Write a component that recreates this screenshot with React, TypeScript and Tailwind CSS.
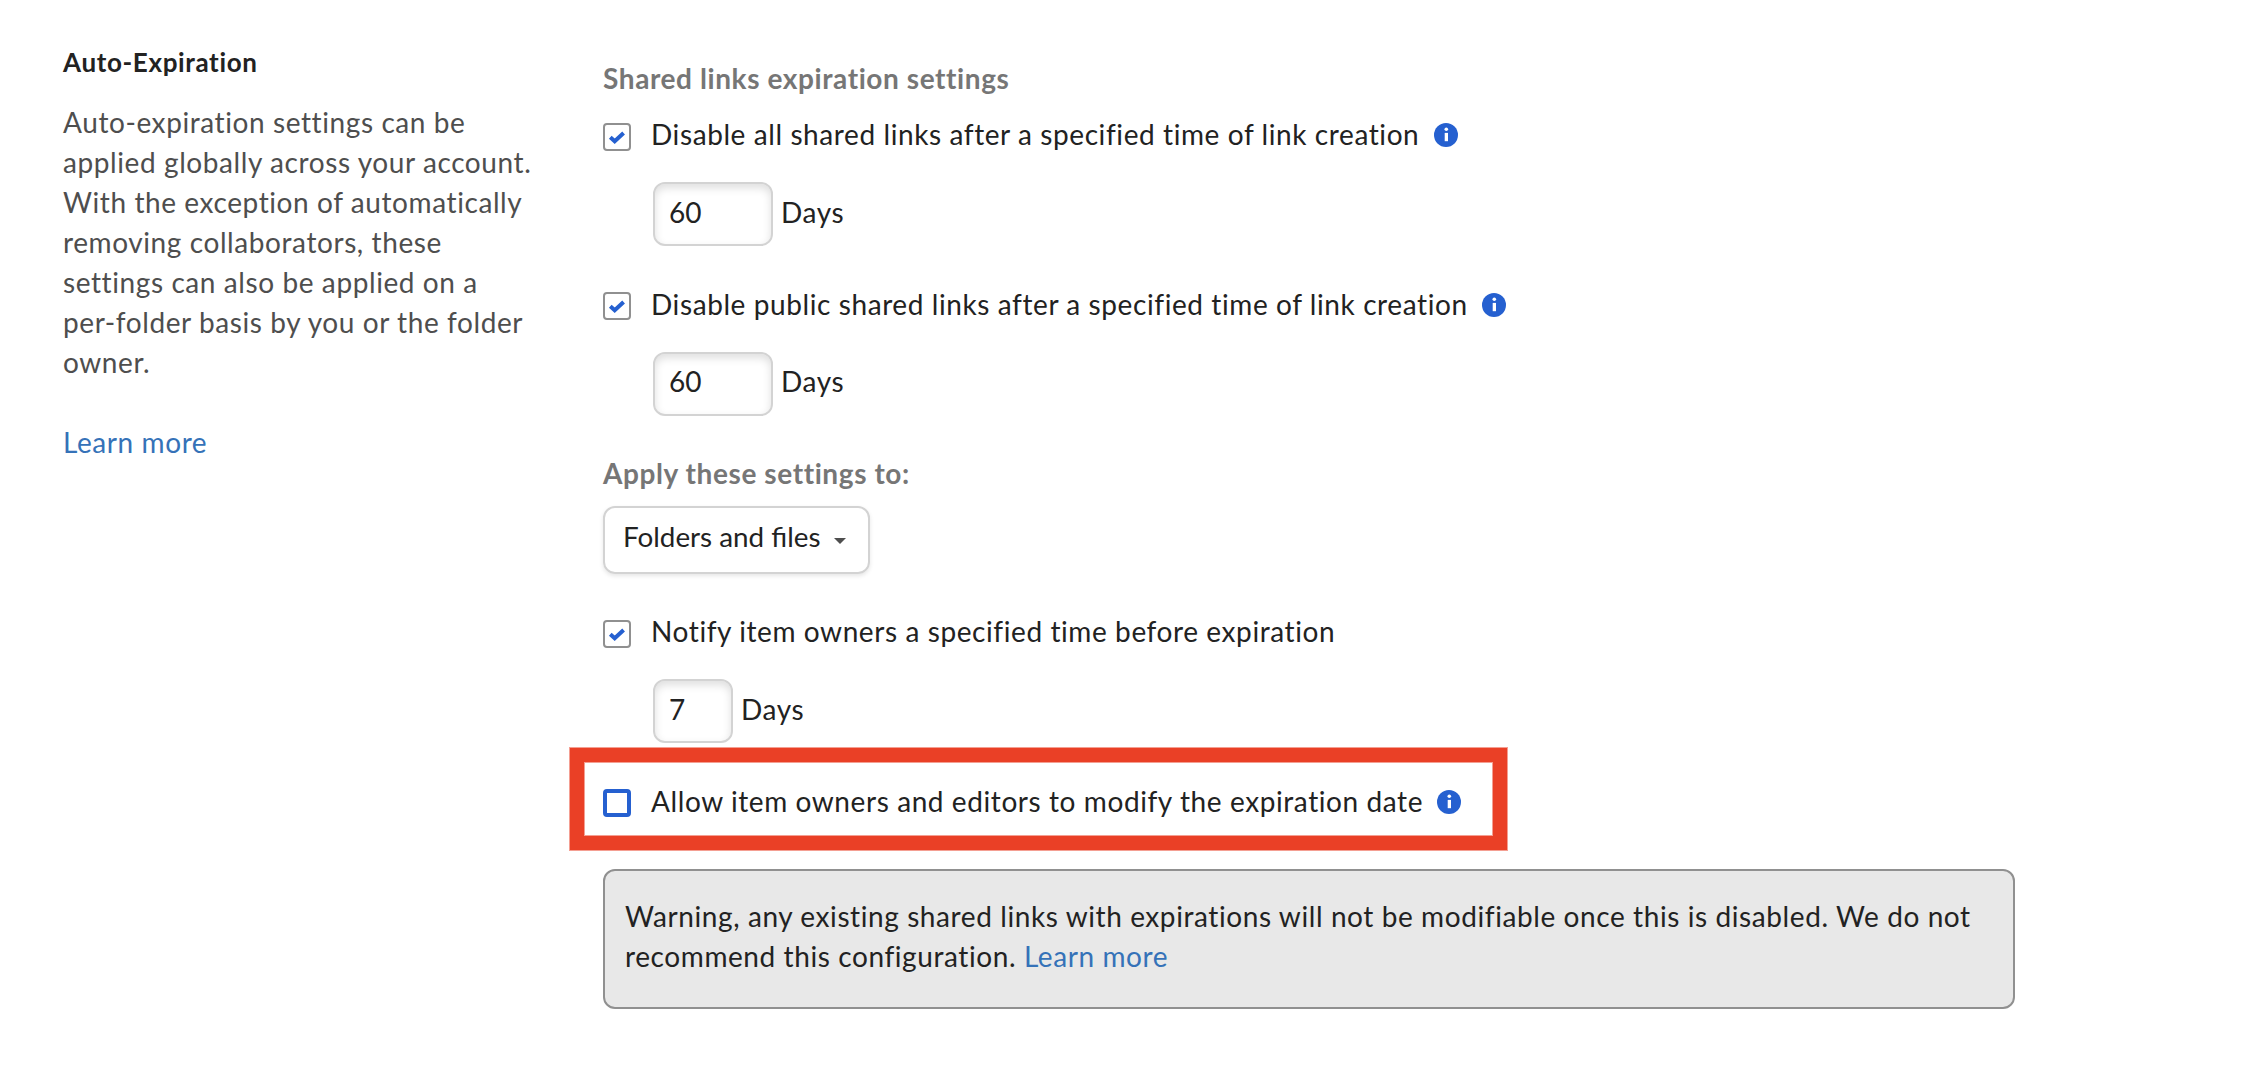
import React from "react";

function InfoIcon({ className = "" }: { className?: string }) {
  return (
    <svg className={`size-6 shrink-0 ${className}`} viewBox="0 0 24 24">
      <circle cx="12" cy="12" r="12" fill="#2560d0" />
      <circle cx="12.3" cy="6.3" r="1.8" fill="#fff" />
      <path d="M10.7 9.9h3.3v8.3h-3.3z" fill="#fff" />
    </svg>
  );
}

function Checkbox({ checked = false, className = "" }: { checked?: boolean; className?: string }) {
  return checked ? (
    <span className={`size-7 shrink-0 rounded-[4px] border-2 border-[#909090] bg-white ${className}`}>
      <svg className="size-6" viewBox="0 0 24 24">
        <path d="M5.3 12.2 9.7 16.2 18.6 8" fill="none" stroke="#2560d0" strokeWidth="4" />
      </svg>
    </span>
  ) : (
    <span className={`size-7 shrink-0 rounded-[4px] border-4 border-[#2560d0] bg-white ${className}`} />
  );
}

function Option({ label, info, checked, boxClass = "mt-[9px]", infoClass = "ml-[15px]" }: { label: string; info?: boolean; checked?: boolean; boxClass?: string; infoClass?: string }) {
  return (
    <div className="flex h-10 items-start whitespace-nowrap">
      <Checkbox checked={checked} className={boxClass} />
      <span className="ml-5">{label}</span>
      {info && <InfoIcon className={`mt-[9px] ${infoClass}`} />}
    </div>
  );
}

function DaysField({ value, widthClass, valueClass = "pt-2", unitClass = "mt-[10px]" }: { value: string; widthClass: string; valueClass?: string; unitClass?: string }) {
  return (
    <div className="ml-[50px] mt-7 flex h-16 items-start">
      <div className={`h-16 rounded-xl border-2 border-[#d3d3d3] pl-[14px] tracking-normal shadow-[inset_0_4px_9px_rgba(0,0,0,0.13)] ${valueClass} ${widthClass}`}>
        {value}
      </div>
      <span className={`ml-2 ${unitClass}`}>Days</span>
    </div>
  );
}

export default function App() {
  return (
    <main className="flex h-[1066px] w-[2248px] overflow-hidden bg-white font-['Lato',sans-serif] text-[28px] leading-10 tracking-[0.59px] text-[#222]">
      <aside className="ml-[63px] w-[500px] shrink-0 pt-[42px]">
        <h2 className="text-[26px] font-bold tracking-[0.64px]">Auto-Expiration</h2>
        <p className="mt-5 whitespace-nowrap text-[#4e4e4e]">
          Auto-expiration settings can be<br />
          applied globally across your account.<br />
          With the exception of automatically<br />
          removing collaborators, these<br />
          settings can also be applied on a<br />
          per-folder basis by you or the folder<br />
          owner.
        </p>
        <a className="mt-10 block text-[#3572b8]">Learn more</a>
      </aside>
      <section className="ml-10 w-[1412px] shrink-0 pt-[58px]">
        <h3 className="mb-4 font-bold text-[#767676]">Shared links expiration settings</h3>
        <Option checked info label="Disable all shared links after a specified time of link creation" />
        <DaysField value="60" widthClass="w-[120px]" />
        <div className="mt-[38px]">
          <Option checked info boxClass="mt-2" infoClass="ml-[14px]" label="Disable public shared links after a specified time of link creation" />
        </div>
        <DaysField value="60" widthClass="w-[120px]" valueClass="pt-[7px]" unitClass="mt-[9px]" />
        <h3 className="mt-[37px] font-bold text-[#767676]">Apply these settings to:</h3>
        <div className="mt-[13px] flex h-[68px] w-[267px] items-start rounded-xl border-2 border-[#d3d3d3] pl-[18px] pt-[9px] text-[27.8px] tracking-normal shadow-[0_2px_4px_rgba(0,0,0,0.1)]">
          Folders and files
          <svg className="ml-[14px] mt-[21px] h-[6px] w-3" viewBox="0 0 12 6">
            <path d="M0 0h12L6 6z" fill="#4e4e4e" />
          </svg>
        </div>
        <div className="mt-[37px]">
          <Option checked label="Notify item owners a specified time before expiration" />
        </div>
        <DaysField value="7" widthClass="w-20" />
        <div className="-ml-[33px] mt-[5px] h-[102px] w-[937px] border-[14px] border-[#ea4026] pl-[19px] pt-[19px] shadow-[0_0_0_1px_#f49f92,inset_0_0_0_1px_#f49f92]">
          <Option info boxClass="mt-2" infoClass="ml-[14px]" label="Allow item owners and editors to modify the expiration date" />
        </div>
        <div className="mt-[19px] h-[140px] whitespace-nowrap rounded-xl border-2 border-[#909090] bg-[#e8e8e8] pl-5 pt-[25px]">
          Warning, any existing shared links with expirations will not be modifiable once this is disabled. We do not<br />
          recommend this configuration. <a className="text-[#3572b8]">Learn more</a>
        </div>
      </section>
    </main>
  );
}
